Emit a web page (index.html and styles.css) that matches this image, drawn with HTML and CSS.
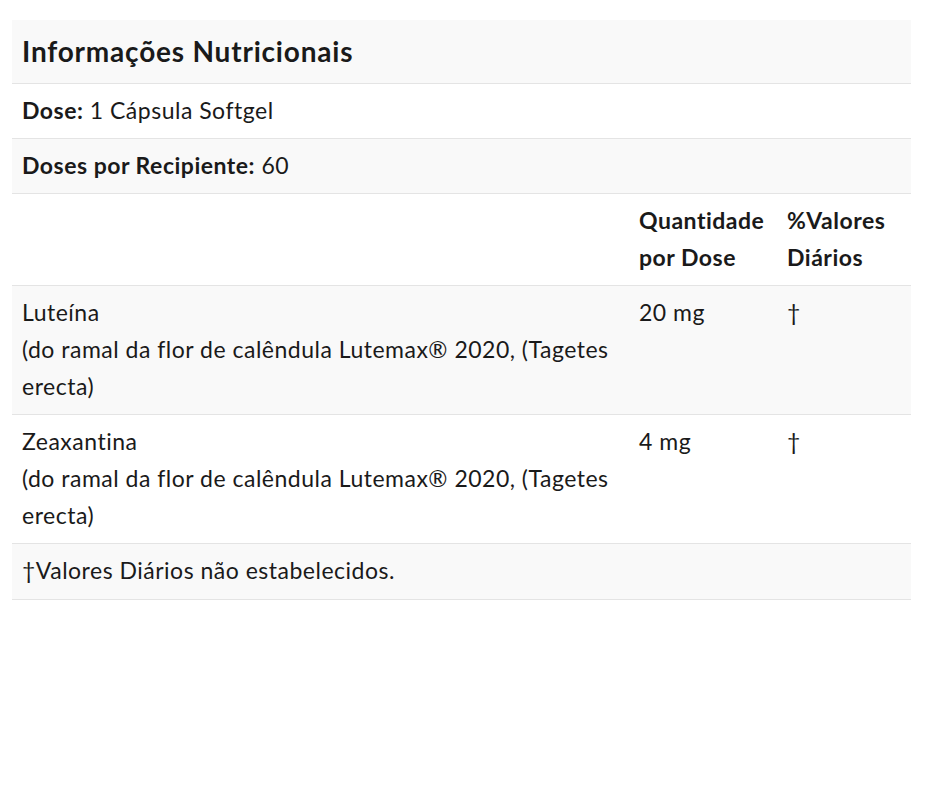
FILE: index.html
```html
<!DOCTYPE html>
<html lang="pt">
<head>
<meta charset="utf-8">
<link rel="stylesheet" href="styles.css">
</head>
<body>
<table class="facts">
  <colgroup>
    <col class="c1"><col class="c2"><col class="c3">
  </colgroup>
  <tbody>
    <tr class="alt"><th colspan="3" class="title">Informações Nutricionais</th></tr>
    <tr><td colspan="3"><strong>Dose:</strong> 1 Cápsula Softgel</td></tr>
    <tr class="alt"><td colspan="3"><strong>Doses por Recipiente:</strong> 60</td></tr>
    <tr><td></td><th>Quantidade por Dose</th><th>%Valores Diários</th></tr>
    <tr class="alt"><td>Luteína<br>(do ramal da flor de calêndula Lutemax® 2020, (Tagetes erecta)</td><td>20 mg</td><td>†</td></tr>
    <tr><td>Zeaxantina<br>(do ramal da flor de calêndula Lutemax® 2020, (Tagetes erecta)</td><td>4 mg</td><td>†</td></tr>
    <tr class="alt foot"><td colspan="3">†Valores Diários não estabelecidos.</td></tr>
  </tbody>
</table>
</body>
</html>
```
FILE: styles.css
```css
html, body {
  margin: 0;
  padding: 0;
  background: #ffffff;
}
body {
  padding: 20px 20px 0 12px;
  font-family: Lato, "Open Sans", sans-serif;
  color: #1a1a1a;
}
.facts {
  width: 899px;
  border-collapse: collapse;
  font-size: 23px;
  line-height: 37px;
  letter-spacing: 0.5px;
}
.c2 { width: 148px; }
.c3 { width: 134px; }
.facts td, .facts th {
  padding: 8px 10px 9px 10px;
  text-align: left;
  vertical-align: top;
  border-bottom: 1px solid #e4e4e4;
}
.facts th { font-weight: 700; }
.facts strong { font-weight: 700; }
.facts tr.alt { background: #f9f9f9; }
.facts th.title {
  font-size: 28px;
  line-height: 46px;
  letter-spacing: 0.8px;
  padding-top: 8px;
  padding-bottom: 9px;
}
.facts tr.foot td { padding-bottom: 10px; }
```
